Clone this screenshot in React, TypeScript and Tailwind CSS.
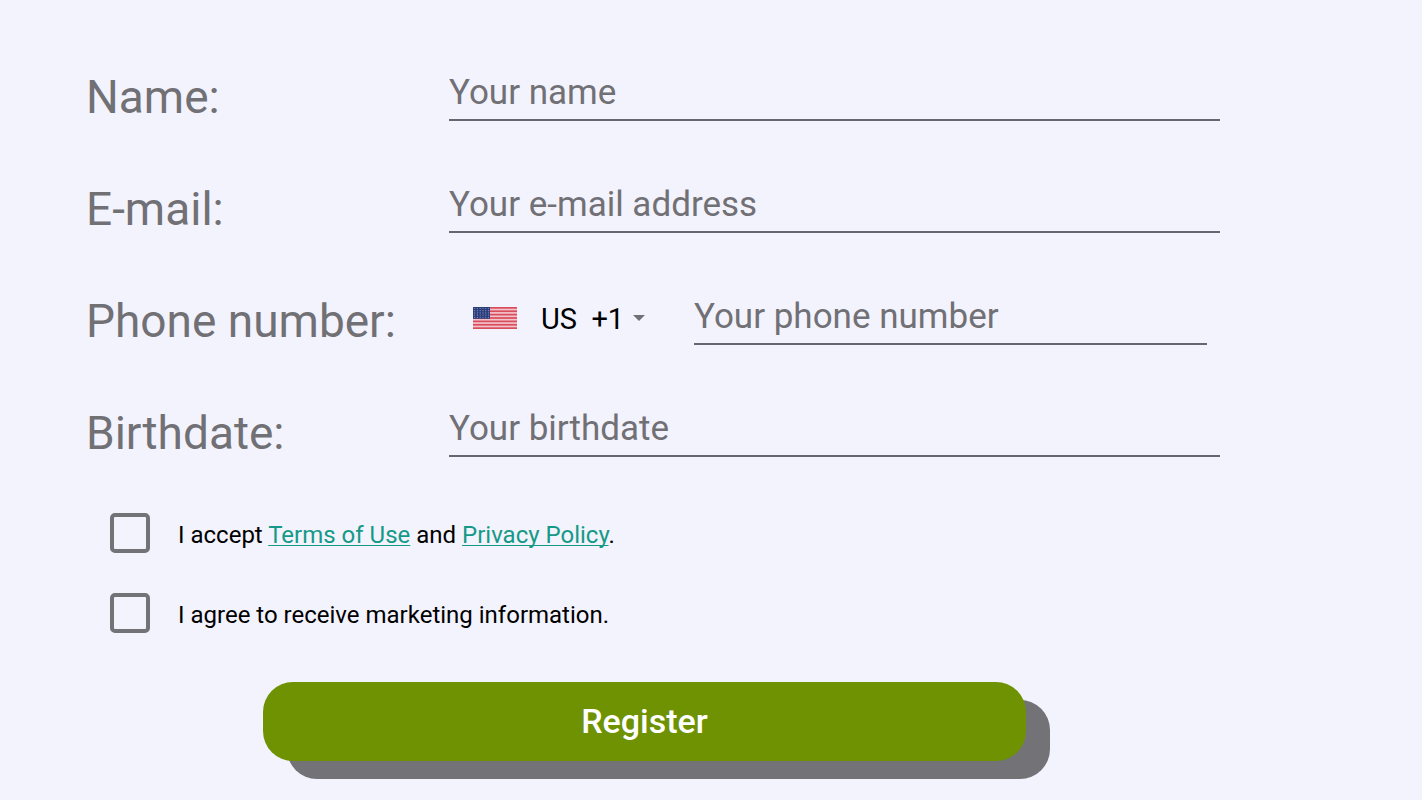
import { useState } from "react";
import type { FormEvent, InputHTMLAttributes, ReactNode } from "react";

const inputStyles =
   "block h-14 w-full min-w-0 border-b-2 border-[#67666c] bg-transparent pt-px font-[Roboto,sans-serif] text-[35px] text-[#333] placeholder:text-[#717075] placeholder:opacity-100 outline-none";

function Field({ id, label, children }: { id: string; label: string; children: ReactNode }) {
   return (
      <div className="flex h-14">
         <label htmlFor={id} className="w-[363px] shrink-0 pt-2 text-[46px] leading-[48px] whitespace-nowrap text-[#717075]">
            {label}
         </label>
         <div className="flex min-w-0 flex-1 items-center">{children}</div>
      </div>
   );
}

function TextInput(props: InputHTMLAttributes<HTMLInputElement>) {
   return <input className={inputStyles} {...props} />;
}

function Check({ id, children }: { id: string; children: ReactNode }) {
   return (
      <div className="flex h-10 items-center">
         <input
            id={id}
            type="checkbox"
            className="size-10 shrink-0 appearance-none rounded-[5px] border-4 border-[#737277] checked:bg-[#737277]"
         />
         <label htmlFor={id} className="pt-1 pl-7 text-2xl text-black">
            {children}
         </label>
      </div>
   );
}

function UsFlag() {
   return (
      <svg viewBox="0 0 44 22" preserveAspectRatio="none" className="h-[22px] w-11 shrink-0" aria-hidden="true">
         <rect width="44" height="22" fill="#f3c3cb" />
         {[0, 2, 4, 6, 8, 10, 12].map((i) => (
            <rect key={i} y={(i * 22) / 13} width="44" height={22 / 13} fill="#d94c5c" />
         ))}
         <rect width="17" height="11.8" fill="#2c3d7c" />
         {[0, 1, 2, 3, 4].map((row) =>
            [0, 1, 2, 3, 4, 5].map((col) => (
               <circle key={`${row}-${col}`} cx={1.6 + col * 2.8} cy={1.5 + row * 2.2} r="0.6" fill="#8593bd" />
            ))
         )}
      </svg>
   );
}

const linkStyles = "text-[#159a87] underline decoration-1 underline-offset-2 [text-decoration-skip-ink:none]";

export default function App() {
   const [country, setCountry] = useState("US");

   const handleSubmit = (e: FormEvent) => {
      e.preventDefault();
   };

   return (
      <main className="min-h-screen bg-[#f3f3fe] font-[Roboto,sans-serif]">
         <form onSubmit={handleSubmit} className="pt-[65px] pr-[202px] pb-5 pl-[86px]">
            <div className="space-y-14">
               <Field id="name" label="Name:">
                  <TextInput id="name" type="text" placeholder="Your name" />
               </Field>
               <Field id="email" label="E-mail:">
                  <TextInput id="email" type="email" placeholder="Your e-mail address" />
               </Field>
               <Field id="phone" label="Phone number:">
                  {/* Country code */}
                  <div className="flex w-[245px] shrink-0 items-center pt-0.5 pl-6">
                     <UsFlag />
                     <div className="relative ml-6">
                        <select
                           aria-label="Country code"
                           value={country}
                           onChange={(e) => setCountry(e.target.value)}
                           className="block w-[108px] appearance-none bg-transparent pt-1 font-[Roboto,sans-serif] text-[29px] text-black outline-none"
                        >
                           <option value="US">US&nbsp;&nbsp;+1</option>
                        </select>
                        <svg viewBox="0 0 12 6" className="pointer-events-none absolute top-1/2 right-1 h-1.5 w-3 -translate-y-1/2" aria-hidden="true">
                           <path d="M0 0h12L6 6z" fill="#717075" />
                        </svg>
                     </div>
                  </div>
                  <div className="min-w-0 flex-1 pr-[13px]">
                     <TextInput id="phone" type="tel" placeholder="Your phone number" />
                  </div>
               </Field>
               <Field id="birthdate" label="Birthdate:">
                  <TextInput id="birthdate" type="text" placeholder="Your birthdate" />
               </Field>
            </div>

            <div className="mt-14 space-y-10 pl-6">
               <Check id="terms">
                  I accept <a href="#terms" className={linkStyles}>Terms of Use</a> and{" "}
                  <a href="#privacy" className={linkStyles}>Privacy Policy</a>.
               </Check>
               <Check id="marketing">I agree to receive marketing information.</Check>
            </div>

            <div className="mt-[49px] pr-[194px] pl-[177px]">
               <button
                  type="submit"
                  className="block h-[79px] w-full rounded-[30px] bg-[#6f9203] text-[34px] font-medium text-white shadow-[24px_18px_0_#737277]"
               >
                  Register
               </button>
            </div>
         </form>
      </main>
   );
}
